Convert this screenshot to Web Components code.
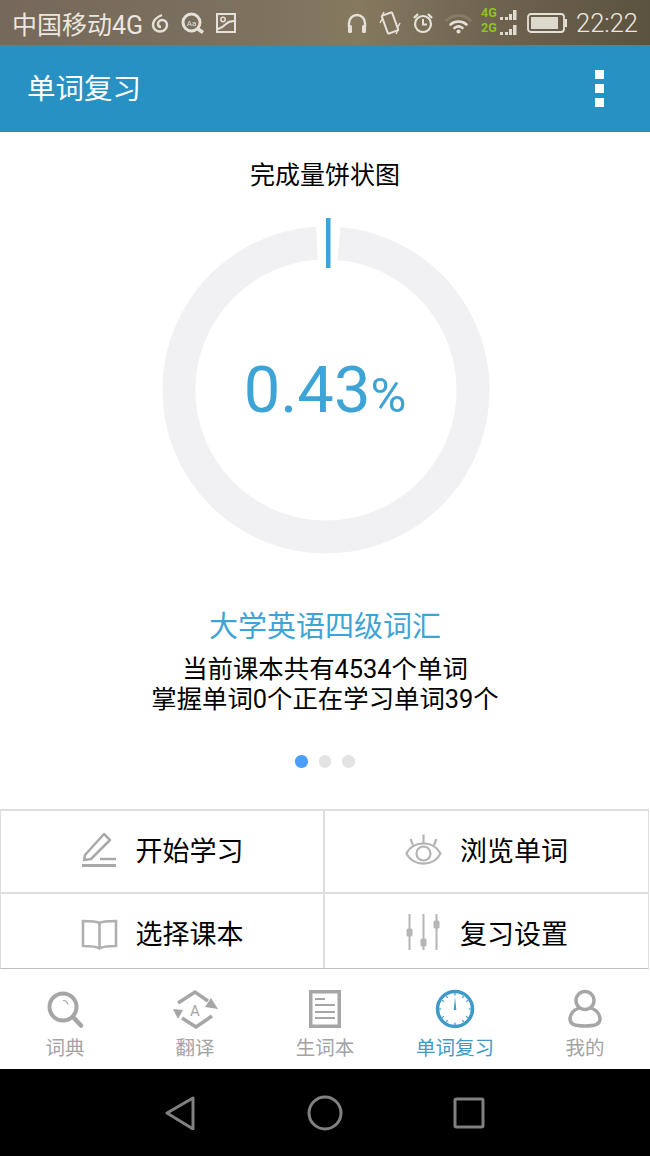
<!DOCTYPE html>
<html lang="zh">
<head>
<meta charset="utf-8">
<title>单词复习</title>
<style>
  html, body { margin: 0; padding: 0; background: #fff; }
  body { font-family: Roboto, "Noto Sans CJK SC", sans-serif; width: 650px; height: 1156px; overflow: hidden; display: flex; flex-direction: column; }
</style>
</head>
<body>
<status-bar></status-bar>
<app-bar>单词复习</app-bar>
<progress-ring title-text="完成量饼状图" value="0.43"></progress-ring>
<course-summary heading="大学英语四级词汇">
  <div>当前课本共有4534个单词</div>
  <div>掌握单词0个正在学习单词39个</div>
</course-summary>
<page-dots count="3" current="0"></page-dots>
<action-grid>
  <action-button icon="pencil">开始学习</action-button>
  <action-button icon="eye">浏览单词</action-button>
  <action-button icon="book">选择课本</action-button>
  <action-button icon="sliders">复习设置</action-button>
</action-grid>
<tab-bar>
  <tab-item icon="search">词典</tab-item>
  <tab-item icon="translate">翻译</tab-item>
  <tab-item icon="doc">生词本</tab-item>
  <tab-item icon="clock" active>单词复习</tab-item>
  <tab-item icon="user">我的</tab-item>
</tab-bar>
<nav-keys></nav-keys>

<script>
// status bar: phone chrome on top
class StatusBar extends HTMLElement {
  constructor() {
    super();
    this.attachShadow({ mode: 'open' });
  }
  connectedCallback() {
    this.shadowRoot.innerHTML = `
      <style>
        :host { display: flex; align-items: center; height: 45px; flex: none; color: #ebe7df; font-size: 25px; padding-right: 12px;
          background: linear-gradient(90deg, #76695b 0%, #7a6e5e 30%, #85795f 55%, #6e6450 75%, #5b5240 100%); }
        svg { display: block; flex: none; fill: none; stroke: #e6e1d8; }
        .carrier { margin-left: 12px; width: 131px; white-space: nowrap; }
        .time { margin-left: 9px; font-size: 25.500px; font-weight: 300; white-space: nowrap; }
        .spacer { flex: 1; }
      </style>
      <span class="carrier">中国移动4G</span>
      <svg style="margin-left:8px" width="18" height="20" viewBox="0 0 18 20" stroke-width="2.400">
        <path d="M11 2C6 4 2 7 2 12a7 6.500 0 0 0 14 0c0-3-2-5-5-5-2.500 0-4 2-4 4 0 2 1.500 3 3 3"/>
      </svg>
      <svg style="margin-left:12px" width="24" height="22" viewBox="0 0 24 22" stroke-width="3">
        <circle cx="10.500" cy="10.500" r="8.500"/>
        <path d="M17 17l5 3.500" stroke-width="3.500"/>
        <text x="10.500" y="13.500" font-size="8" text-anchor="middle" fill="#e6e1d8" stroke="none" font-family="Roboto">Aa</text>
      </svg>
      <svg style="margin-left:10px" width="22" height="22" viewBox="0 0 22 22" stroke-width="2">
        <rect x="2" y="2" width="18" height="18"/>
        <circle cx="8" cy="7.500" r="2.200" stroke-width="1.500"/>
        <path d="M3 17c4-1 6-3 8-5s4-3 8-3"/>
      </svg>
      <span class="spacer"></span>
      <svg width="22" height="22" viewBox="0 0 22 22" stroke-width="2.400">
        <path d="M3 15v-4a8 8 0 0 1 16 0v4"/>
        <rect x="2" y="13" width="4" height="8" rx="1.500" fill="#e6e1d8" stroke="none"/>
        <rect x="16" y="13" width="4" height="8" rx="1.500" fill="#e6e1d8" stroke="none"/>
      </svg>
      <svg style="margin-left:11px" width="22" height="24" viewBox="0 0 22 24" stroke-width="2">
        <rect x="5.500" y="2.500" width="11" height="19" rx="1" transform="rotate(-20 11 12)"/>
        <path d="M3 8L1 12M5 1L3 5M19 19l-2 4M21 12l-2 4" stroke-width="1.500"/>
      </svg>
      <svg style="margin-left:11px" width="22" height="24" viewBox="0 0 22 24" stroke-width="2.200">
        <circle cx="11" cy="13" r="8"/>
        <path d="M11 8v5.500h4" stroke-width="2"/>
        <path d="M2 7l4-4M20 7l-4-4" stroke-width="2.400"/>
      </svg>
      <svg style="margin-left:11px" width="27" height="22" viewBox="0 0 27 22" stroke-linecap="round">
        <path d="M1.500 8.500C8 2 19 2 25.500 8.500" stroke="#857c69" stroke-width="2.600"/>
        <path d="M5.500 12.500c4.500-4 11.500-4 16 0" stroke-width="2.600"/>
        <path d="M9.500 16c2.500-2 5.500-2 8 0" stroke-width="2.600"/>
        <circle cx="13.500" cy="19.500" r="2" fill="#e6e1d8" stroke="none"/>
      </svg>
      <svg style="margin-left:8px" width="37" height="45" viewBox="0 -7 37 45">
        <text x="1" y="10" font-size="12.500" font-weight="700" fill="#8fc31f" stroke="none" font-family="Roboto">4G</text>
        <text x="1" y="25" font-size="12.500" font-weight="700" fill="#8fc31f" stroke="none" font-family="Roboto">2G</text>
        <g fill="#e0dbd0" stroke="none">
          <rect x="20" y="10" width="3" height="3"/><rect x="25" y="10" width="3" height="3"/><rect x="29" y="7" width="3" height="6"/><rect x="33" y="3" width="3.500" height="10"/>
          <rect x="20" y="25" width="3" height="3"/><rect x="25" y="25" width="3" height="3"/><rect x="29" y="22" width="3" height="6"/><rect x="33" y="18" width="3.500" height="10"/>
        </g>
      </svg>
      <svg style="margin-left:10px" width="40" height="20" viewBox="0 0 40 20">
        <rect x="1" y="1" width="36" height="18" rx="3" stroke-width="1.800"/>
        <rect x="4" y="4" width="27" height="12" fill="#dcd8cc" stroke="none"/>
        <rect x="38" y="6" width="2" height="8" fill="#e6e1d8" stroke="none"/>
      </svg>
      <span class="time">22:22</span>
    `;
  }
}
customElements.define('status-bar', StatusBar);

class AppBar extends HTMLElement {
  constructor() {
    super();
    this.attachShadow({ mode: 'open' });
  }
  connectedCallback() {
    this.shadowRoot.innerHTML = `
      <style>
        :host { display: flex; align-items: center; justify-content: space-between; flex: none; height: 87px;
          padding: 0 46px 0 27px; background: #2791c3; color: #fff; font-size: 28.500px; }
        .label { margin-bottom: 4px; }
        .menu { display: flex; flex-direction: column; gap: 5px; }
        .menu i { display: block; width: 9px; height: 9px; background: #fff; }
      </style>
      <span class="label"><slot></slot></span>
      <div class="menu"><i></i><i></i><i></i></div>
    `;
  }
}
customElements.define('app-bar', AppBar);

class ProgressRing extends HTMLElement {
  constructor() {
    super();
    this.attachShadow({ mode: 'open' });
  }
  connectedCallback() {
    this.shadowRoot.innerHTML = `
      <style>
        :host { display: block; flex: none; }
        .title { height: 30px; padding-top: 29px; text-align: center; line-height: 30px; font-size: 25px; color: #000; }
        .stage { display: grid; margin-top: 9px; height: 409px; }
        svg { grid-area: 1 / 1; display: block; }
        .value { grid-area: 1 / 1; align-self: start; margin-top: 148px; text-align: center; color: #3ea4d6;
          font-size: 65px; line-height: 84px; font-family: Roboto, sans-serif; }
        .value small { font-size: 49px; }
      </style>
      <div class="title">${this.getAttribute('title-text')}</div>
      <div class="stage">
        <svg width="650" height="398" viewBox="0 0 650 398" fill="none">
          <path d="M339 43.600A147 147 0 1 1 317 43.300" stroke="#f1f1f3" stroke-width="33"/>
          <rect x="326" y="18" width="4.500" height="50" fill="#3ea4d6"/>
        </svg>
        <div class="value">${this.getAttribute('value')}<small>%</small></div>
      </div>
    `;
  }
}
customElements.define('progress-ring', ProgressRing);

class CourseSummary extends HTMLElement {
  constructor() {
    super();
    this.attachShadow({ mode: 'open' });
  }
  connectedCallback() {
    this.shadowRoot.innerHTML = `
      <style>
        :host { display: block; flex: none; text-align: center; font-size: 25.400px; line-height: 30px; color: #000; }
        h2 { margin: 0 0 9px; font-weight: 400; font-size: 29px; line-height: 36px; color: #3ea4d6; }
      </style>
      <h2>${this.getAttribute('heading')}</h2>
      <slot></slot>
    `;
  }
}
customElements.define('course-summary', CourseSummary);

class PageDots extends HTMLElement {
  constructor() {
    super();
    this.attachShadow({ mode: 'open' });
  }
  connectedCallback() {
    const count = Number(this.getAttribute('count'));
    const current = Number(this.getAttribute('current'));
    let dots = '';
    for (let i = 0; i < count; i++) {
      dots += `<i class="${i === current ? 'on' : ''}"></i>`;
    }
    this.shadowRoot.innerHTML = `
      <style>
        :host { display: flex; justify-content: center; gap: 11px; flex: none; height: 13px; margin: 41px 0 41px; }
        i { display: block; width: 12.500px; height: 12.500px; border-radius: 50%; background: #e3e3e3; }
        i.on { background: #4b9efa; }
      </style>
      ${dots}
    `;
  }
}
customElements.define('page-dots', PageDots);

class ActionGrid extends HTMLElement {
  constructor() {
    super();
    this.attachShadow({ mode: 'open' });
  }
  connectedCallback() {
    this.shadowRoot.innerHTML = `
      <style>
        :host { display: grid; grid-template-columns: 322px 323px; grid-template-rows: 81px 74px; gap: 2px; flex: none;
          width: 647px; background: #dedede; border: 1px solid #dedede; border-top-width: 2px; border-bottom-color: #bdbdbd; }
      </style>
      <slot></slot>
    `;
  }
}
customElements.define('action-grid', ActionGrid);

const ACTION_ICONS = {
  pencil: `<g fill="none" stroke="#a9a9a9" stroke-width="2.500">
      <path d="M3 29l1-5L23 3l6 6L10 28z" stroke-linejoin="round"/>
      <path d="M19 28h16"/>
      <path d="M1 34.500h34" stroke-width="2.800"/>
    </g>`,
  eye: `<g fill="none" stroke="#b4b4b4" stroke-width="2.200">
      <path d="M1.500 22.500C8 9 29 9 35.500 22.500C29 36 8 36 1.500 22.500z"/>
      <circle cx="18.500" cy="22.500" r="7"/>
      <path d="M18.500 3.500V13M5.500 8L8 14M31.500 8L29 14"/>
    </g>`,
  book: `<g fill="none" stroke="#b0b0b0" stroke-width="2.600">
      <path d="M18.500 9C15 7 8 7 2 7v25c6 0 13 0 16.500 2.500C22 32 29 32 35 32V7c-6 0-13 0-16.500 2z"/>
      <path d="M18.500 9v25"/>
    </g>`,
  sliders: `<g fill="#b6b6b6">
      <rect x="3.500" y="0" width="2" height="36"/><rect x="17.500" y="0" width="2" height="36"/><rect x="30.500" y="0" width="2" height="36"/>
      <rect x="1.500" y="14.500" width="6" height="8" rx="1.500"/><rect x="15.500" y="24.500" width="6" height="8" rx="1.500"/><rect x="28.500" y="6.500" width="6" height="8" rx="1.500"/>
    </g>`
};

class ActionButton extends HTMLElement {
  constructor() {
    super();
    this.attachShadow({ mode: 'open' });
  }
  connectedCallback() {
    const icon = ACTION_ICONS[this.getAttribute('icon')];
    this.shadowRoot.innerHTML = `
      <style>
        :host { display: flex; align-items: center; justify-content: center; gap: 18px; background: #fff; font-size: 27px; color: #000; padding-bottom: 4px; box-sizing: border-box; }
        :host(:nth-child(n+3)) { padding-top: 3px; padding-bottom: 0; }
        svg { display: block; flex: none; }
      </style>
      <svg width="37" height="37" viewBox="0 0 37 37">${icon}</svg>
      <span><slot></slot></span>
    `;
  }
}
customElements.define('action-button', ActionButton);

class TabBar extends HTMLElement {
  constructor() {
    super();
    this.attachShadow({ mode: 'open' });
  }
  connectedCallback() {
    this.shadowRoot.innerHTML = `
      <style>
        :host { display: grid; grid-template-columns: repeat(5, 130px); flex: none; height: 100px; background: #fff; }
      </style>
      <slot></slot>
    `;
  }
}
customElements.define('tab-bar', TabBar);

const TAB_ICONS = {
  search: `<g fill="none" stroke="#a6a6a6">
      <circle cx="22" cy="18" r="13.500" stroke-width="4"/>
      <path d="M32 28l8 8.500" stroke-width="4.500" stroke-linecap="round"/>
      <path d="M22 11.500c2.500 0 4.500 1.500 5 4" stroke-width="1.200"/>
    </g>`,
  translate: `<g fill="none" stroke="#a6a6a6" stroke-width="3.500">
      <path d="M7 14L24 3l13 9"/><path d="M41 27L25 38l-14-9"/>
      <path d="M40 9l7 11-13-2zM2 20l10 1-5 9z" fill="#a6a6a6" stroke="none"/>
      <text x="24" y="27" font-size="15" text-anchor="middle" fill="#a6a6a6" stroke="none" font-family="Roboto">A</text>
    </g>`,
  doc: `<g fill="none" stroke="#a6a6a6">
      <path d="M9.750 2.750h28.500v34.500H9.750z" stroke-width="3.500"/>
      <path d="M14 10h10M14 16h20M14 23h20M14 29h20" stroke-width="2"/>
    </g>`,
  clock: `<g fill="none" stroke="#3e9ac8">
      <circle cx="24" cy="20" r="17.500" stroke-width="3.500"/>
      <path d="M24 4v2.500M24 33.500V36M8 20h2.500M37.500 20H40M15.500 7l1 2M32.500 7l-1 2M15.500 33l1-2M32.500 33l-1-2M11 11.500l2 1M37 11.500l-2 1M11 28.500l2-1M37 28.500l-2-1" stroke-width="1.200"/>
      <path d="M22.700 21L24 8l1.300 13z" fill="#3e9ac8" stroke="none"/>
    </g>`,
  user: `<g fill="none" stroke="#a6a6a6" stroke-width="3.500">
      <circle cx="24" cy="11.500" r="9"/>
      <path d="M18 19c-5 2-9 6-9 11 0 5 4 7 15 7s15-2 15-7c0-5-4-9-9-11"/>
    </g>`
};

class TabItem extends HTMLElement {
  constructor() {
    super();
    this.attachShadow({ mode: 'open' });
  }
  connectedCallback() {
    const icon = TAB_ICONS[this.getAttribute('icon')];
    this.shadowRoot.innerHTML = `
      <style>
        :host { display: flex; flex-direction: column; align-items: center; padding-top: 20px; font-size: 19.500px; line-height: 26px; color: #a3a3a3; }
        :host([active]) { color: #3e9ac8; }
        svg { display: block; flex: none; margin-bottom: 7px; }
      </style>
      <svg width="48" height="40" viewBox="0 0 48 40">${icon}</svg>
      <span><slot></slot></span>
    `;
  }
}
customElements.define('tab-item', TabItem);

class NavKeys extends HTMLElement {
  constructor() {
    super();
    this.attachShadow({ mode: 'open' });
  }
  connectedCallback() {
    this.shadowRoot.innerHTML = `
      <style>
        :host { display: flex; flex: none; height: 87px; background: #000; align-items: center; padding-left: 165px; }
        svg { display: block; fill: none; stroke: #808080; stroke-width: 3; stroke-linejoin: round; }
        .home { margin: 0 110px 0 112px; }
      </style>
      <svg width="30" height="34" viewBox="0 0 30 34"><path d="M2 17L28 2v31z"/></svg>
      <svg class="home" width="36" height="36" viewBox="0 0 36 36"><circle cx="18" cy="18" r="16"/></svg>
      <svg width="32" height="32" viewBox="0 0 32 32"><rect x="2" y="2" width="28" height="28" rx="1.500"/></svg>
    `;
  }
}
customElements.define('nav-keys', NavKeys);
</script>
</body>
</html>
